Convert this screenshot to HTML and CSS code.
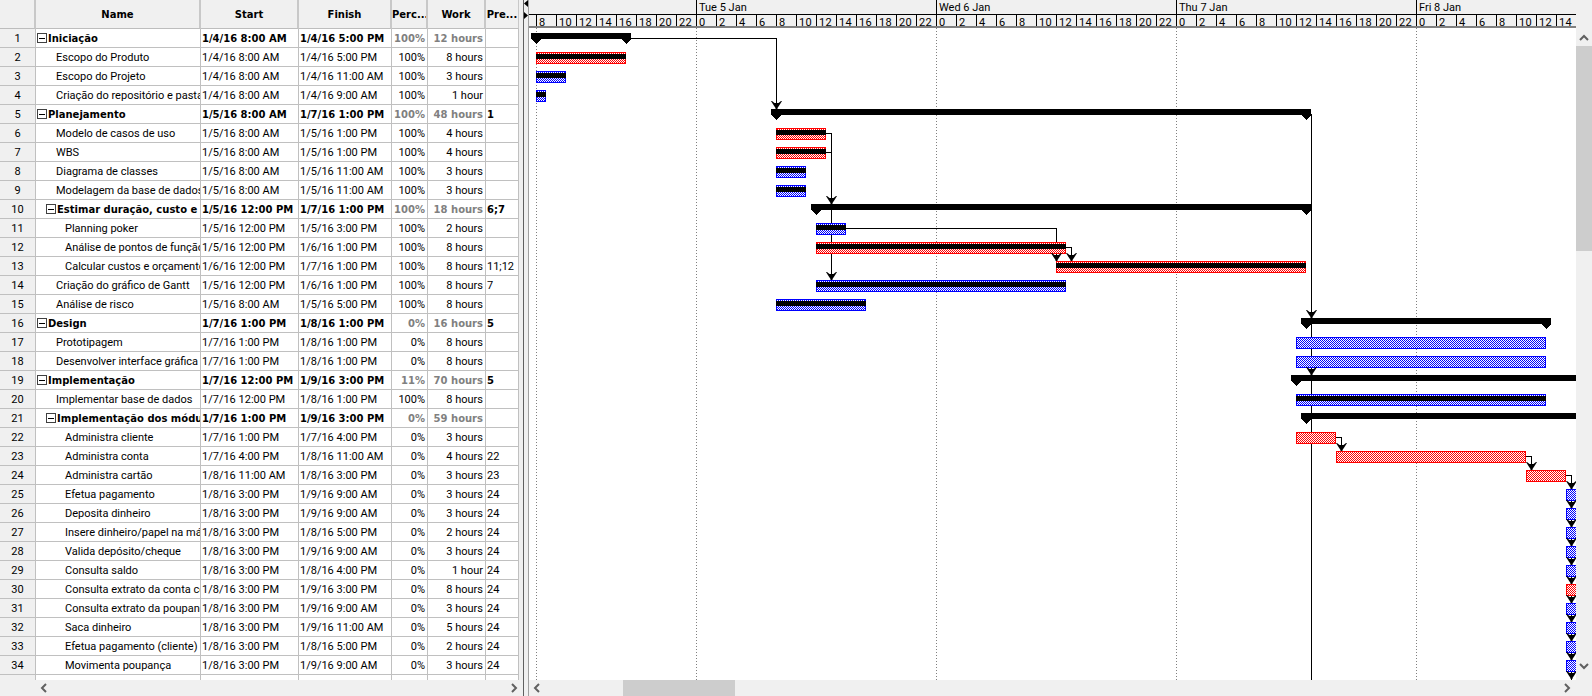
FILE: index.html
```html
<!DOCTYPE html>
<html lang="pt">
<head>
  <meta charset="UTF-8">
  <title>Cronograma - Gantt</title>
  <link rel="stylesheet" href="styles.css">
</head>
<body>
<div class="app">

  <!-- tabela de tarefas -->
  <div class="left">
    <div class="tablebox">
      <table class="tasks">
        <colgroup>
          <col class="c-id"><col class="c-name"><col class="c-start"><col class="c-finish"><col class="c-perc"><col class="c-work"><col class="c-pred">
        </colgroup>
        <thead>
          <tr><th></th><th>Name</th><th>Start</th><th>Finish</th><th>Perc...</th><th>Work</th><th>Pre...</th></tr>
        </thead>
        <tbody>
          <tr class="sum"><td>1</td><td class="lv0"><span class="tog"></span>Iniciação</td><td>1/4/16 8:00 AM</td><td>1/4/16 5:00 PM</td><td>100%</td><td>12 hours</td><td></td></tr>
          <tr><td>2</td><td class="lv1">Escopo do Produto</td><td>1/4/16 8:00 AM</td><td>1/4/16 5:00 PM</td><td>100%</td><td>8 hours</td><td></td></tr>
          <tr><td>3</td><td class="lv1">Escopo do Projeto</td><td>1/4/16 8:00 AM</td><td>1/4/16 11:00 AM</td><td>100%</td><td>3 hours</td><td></td></tr>
          <tr><td>4</td><td class="lv1">Criação do repositório e pastas</td><td>1/4/16 8:00 AM</td><td>1/4/16 9:00 AM</td><td>100%</td><td>1 hour</td><td></td></tr>
          <tr class="sum"><td>5</td><td class="lv0"><span class="tog"></span>Planejamento</td><td>1/5/16 8:00 AM</td><td>1/7/16 1:00 PM</td><td>100%</td><td>48 hours</td><td>1</td></tr>
          <tr><td>6</td><td class="lv1">Modelo de casos de uso</td><td>1/5/16 8:00 AM</td><td>1/5/16 1:00 PM</td><td>100%</td><td>4 hours</td><td></td></tr>
          <tr><td>7</td><td class="lv1">WBS</td><td>1/5/16 8:00 AM</td><td>1/5/16 1:00 PM</td><td>100%</td><td>4 hours</td><td></td></tr>
          <tr><td>8</td><td class="lv1">Diagrama de classes</td><td>1/5/16 8:00 AM</td><td>1/5/16 11:00 AM</td><td>100%</td><td>3 hours</td><td></td></tr>
          <tr><td>9</td><td class="lv1">Modelagem da base de dados</td><td>1/5/16 8:00 AM</td><td>1/5/16 11:00 AM</td><td>100%</td><td>3 hours</td><td></td></tr>
          <tr class="sum"><td>10</td><td class="lv1t"><span class="tog"></span>Estimar duração, custo e cronograma</td><td>1/5/16 12:00 PM</td><td>1/7/16 1:00 PM</td><td>100%</td><td>18 hours</td><td>6;7</td></tr>
          <tr><td>11</td><td class="lv2">Planning poker</td><td>1/5/16 12:00 PM</td><td>1/5/16 3:00 PM</td><td>100%</td><td>2 hours</td><td></td></tr>
          <tr><td>12</td><td class="lv2">Análise de pontos de função</td><td>1/5/16 12:00 PM</td><td>1/6/16 1:00 PM</td><td>100%</td><td>8 hours</td><td></td></tr>
          <tr><td>13</td><td class="lv2">Calcular custos e orçamento</td><td>1/6/16 12:00 PM</td><td>1/7/16 1:00 PM</td><td>100%</td><td>8 hours</td><td>11;12</td></tr>
          <tr><td>14</td><td class="lv1">Criação do gráfico de Gantt</td><td>1/5/16 12:00 PM</td><td>1/6/16 1:00 PM</td><td>100%</td><td>8 hours</td><td>7</td></tr>
          <tr><td>15</td><td class="lv1">Análise de risco</td><td>1/5/16 8:00 AM</td><td>1/5/16 5:00 PM</td><td>100%</td><td>8 hours</td><td></td></tr>
          <tr class="sum"><td>16</td><td class="lv0"><span class="tog"></span>Design</td><td>1/7/16 1:00 PM</td><td>1/8/16 1:00 PM</td><td>0%</td><td>16 hours</td><td>5</td></tr>
          <tr><td>17</td><td class="lv1">Prototipagem</td><td>1/7/16 1:00 PM</td><td>1/8/16 1:00 PM</td><td>0%</td><td>8 hours</td><td></td></tr>
          <tr><td>18</td><td class="lv1">Desenvolver interface gráfica</td><td>1/7/16 1:00 PM</td><td>1/8/16 1:00 PM</td><td>0%</td><td>8 hours</td><td></td></tr>
          <tr class="sum"><td>19</td><td class="lv0"><span class="tog"></span>Implementação</td><td>1/7/16 12:00 PM</td><td>1/9/16 3:00 PM</td><td>11%</td><td>70 hours</td><td>5</td></tr>
          <tr><td>20</td><td class="lv1">Implementar base de dados</td><td>1/7/16 12:00 PM</td><td>1/8/16 1:00 PM</td><td>100%</td><td>8 hours</td><td></td></tr>
          <tr class="sum"><td>21</td><td class="lv1t"><span class="tog"></span>Implementação dos módulos</td><td>1/7/16 1:00 PM</td><td>1/9/16 3:00 PM</td><td>0%</td><td>59 hours</td><td></td></tr>
          <tr><td>22</td><td class="lv2">Administra cliente</td><td>1/7/16 1:00 PM</td><td>1/7/16 4:00 PM</td><td>0%</td><td>3 hours</td><td></td></tr>
          <tr><td>23</td><td class="lv2">Administra conta</td><td>1/7/16 4:00 PM</td><td>1/8/16 11:00 AM</td><td>0%</td><td>4 hours</td><td>22</td></tr>
          <tr><td>24</td><td class="lv2">Administra cartão</td><td>1/8/16 11:00 AM</td><td>1/8/16 3:00 PM</td><td>0%</td><td>3 hours</td><td>23</td></tr>
          <tr><td>25</td><td class="lv2">Efetua pagamento</td><td>1/8/16 3:00 PM</td><td>1/9/16 9:00 AM</td><td>0%</td><td>3 hours</td><td>24</td></tr>
          <tr><td>26</td><td class="lv2">Deposita dinheiro</td><td>1/8/16 3:00 PM</td><td>1/9/16 9:00 AM</td><td>0%</td><td>3 hours</td><td>24</td></tr>
          <tr><td>27</td><td class="lv2">Insere dinheiro/papel na máquina</td><td>1/8/16 3:00 PM</td><td>1/8/16 5:00 PM</td><td>0%</td><td>2 hours</td><td>24</td></tr>
          <tr><td>28</td><td class="lv2">Valida depósito/cheque</td><td>1/8/16 3:00 PM</td><td>1/9/16 9:00 AM</td><td>0%</td><td>3 hours</td><td>24</td></tr>
          <tr><td>29</td><td class="lv2">Consulta saldo</td><td>1/8/16 3:00 PM</td><td>1/8/16 4:00 PM</td><td>0%</td><td>1 hour</td><td>24</td></tr>
          <tr><td>30</td><td class="lv2">Consulta extrato da conta corrente</td><td>1/8/16 3:00 PM</td><td>1/9/16 3:00 PM</td><td>0%</td><td>8 hours</td><td>24</td></tr>
          <tr><td>31</td><td class="lv2">Consulta extrato da poupança</td><td>1/8/16 3:00 PM</td><td>1/9/16 9:00 AM</td><td>0%</td><td>3 hours</td><td>24</td></tr>
          <tr><td>32</td><td class="lv2">Saca dinheiro</td><td>1/8/16 3:00 PM</td><td>1/9/16 11:00 AM</td><td>0%</td><td>5 hours</td><td>24</td></tr>
          <tr><td>33</td><td class="lv2">Efetua pagamento (cliente)</td><td>1/8/16 3:00 PM</td><td>1/8/16 5:00 PM</td><td>0%</td><td>2 hours</td><td>24</td></tr>
          <tr><td>34</td><td class="lv2">Movimenta poupança</td><td>1/8/16 3:00 PM</td><td>1/9/16 9:00 AM</td><td>0%</td><td>3 hours</td><td>24</td></tr>
          <tr class="last"><td></td><td></td><td></td><td></td><td></td><td></td><td></td></tr>
        </tbody>
      </table>
    </div>
    <div class="hscroll table-scroll">
      <svg class="chev" width="8" height="10" viewBox="0 0 8 10"><path d="M6 1L2 5L6 9"/></svg>
      <svg class="chev" width="8" height="10" viewBox="0 0 8 10"><path d="M2 1L6 5L2 9"/></svg>
    </div>
  </div>

  <div class="split">
    <svg width="4" height="20" viewBox="0 0 4 20">
      <path d="M0 3.5L4 0V7Z"/>
      <path d="M4 15.5L0 12V19Z"/>
    </svg>
  </div>

  <!-- grafico -->
  <div class="right">
    <div class="timeline">
      <div class="days">
        <span class="pad-days"></span>
        <span class="day">Tue 5 Jan</span>
        <span class="day">Wed 6 Jan</span>
        <span class="day">Thu 7 Jan</span>
        <span class="day">Fri 8 Jan</span>
      </div>
      <div class="ticks">
        <span class="pad-ticks"></span>
        <span>8</span><span>10</span><span>12</span><span>14</span><span>16</span><span>18</span><span>20</span><span>22</span>
        <span>0</span><span>2</span><span>4</span><span>6</span><span>8</span><span>10</span><span>12</span><span>14</span><span>16</span><span>18</span><span>20</span><span>22</span>
        <span>0</span><span>2</span><span>4</span><span>6</span><span>8</span><span>10</span><span>12</span><span>14</span><span>16</span><span>18</span><span>20</span><span>22</span>
        <span>0</span><span>2</span><span>4</span><span>6</span><span>8</span><span>10</span><span>12</span><span>14</span><span>16</span><span>18</span><span>20</span><span>22</span>
        <span>0</span><span>2</span><span>4</span><span>6</span><span>8</span><span>10</span><span>12</span><span>14</span>
      </div>
    </div>
    <div class="chartrow">
      <svg class="chart" width="1047" height="652" viewBox="529 28 1047 652" shape-rendering="crispEdges">
        <defs>
          <pattern id="hred" width="2" height="2" patternUnits="userSpaceOnUse">
            <rect width="2" height="2" fill="#fff"/><rect width="1" height="1" fill="#f00"/><rect x="1" y="1" width="1" height="1" fill="#f00"/>
          </pattern>
          <pattern id="hblue" width="2" height="2" patternUnits="userSpaceOnUse">
            <rect width="2" height="2" fill="#fff"/><rect width="1" height="1" fill="#00f"/><rect x="1" y="1" width="1" height="1" fill="#00f"/>
          </pattern>
          <path id="arrow" d="M-5 -7L-4 -7L-1.5 -5H2.5L5 -7L6 -7L3.5 -3L1.5 0V1H-0.5V0L-2.5 -3Z" shape-rendering="auto"/>
        </defs>

        <!-- inicio dos dias -->
        <g class="daylines">
          <path d="M536.5 28V680M696.5 28V680M936.5 28V680M1176.5 28V680M1416.5 28V680"/>
        </g>

        <!-- dependencias -->
        <g class="links">
          <path d="M631 38.5H776.5V109"/>
          <path d="M826 133.5H831.5V280"/>
          <path d="M826 152.5H831.5"/>
          <path d="M846 228.5H1056.5V261"/>
          <path d="M1066 247.5H1071.5V261"/>
          <path d="M1311.5 114V680"/>
          <path d="M1336 437.5H1341.5V451"/>
          <path d="M1526 456.5H1531.5V470"/>
          <path d="M1566 475.5H1571.5V680"/>
        </g>

        <!-- tarefas resumo -->
        <g>
          <polygon points="531,33 631,33 631,39 626,44 621,39 541,39 536,44 531,39"/>
          <polygon points="771,109 1311,109 1311,115 1306,120 1301,115 781,115 776,120 771,115"/>
          <polygon points="811,204 1311,204 1311,210 1306,215 1301,210 821,210 816,215 811,210"/>
          <polygon points="1301,318 1551,318 1551,324 1546,329 1541,324 1311,324 1306,329 1301,324"/>
          <polygon points="1291,375 1580,375 1580,381 1301,381 1296,386 1291,381"/>
          <polygon points="1301,413 1580,413 1580,419 1311,419 1306,424 1301,419"/>
        </g>

        <!-- tarefas vermelhas -->
        <g fill="url(#hred)" stroke="#f00">
          <rect x="536.5" y="52.5" width="89" height="11"/>
          <rect x="776.5" y="128.5" width="49" height="11"/>
          <rect x="776.5" y="147.5" width="49" height="11"/>
          <rect x="816.5" y="242.5" width="249" height="11"/>
          <rect x="1056.5" y="261.5" width="249" height="11"/>
          <rect x="1296.5" y="432.5" width="39" height="11"/>
          <rect x="1336.5" y="451.5" width="189" height="11"/>
          <rect x="1526.5" y="470.5" width="39" height="11"/>
          <rect x="1566.5" y="584.5" width="30" height="11"/>
        </g>

        <!-- tarefas azuis -->
        <g fill="url(#hblue)" stroke="#00f">
          <rect x="536.5" y="71.5" width="29" height="11"/>
          <rect x="536.5" y="90.5" width="9" height="11"/>
          <rect x="776.5" y="166.5" width="29" height="11"/>
          <rect x="776.5" y="185.5" width="29" height="11"/>
          <rect x="816.5" y="223.5" width="29" height="11"/>
          <rect x="816.5" y="280.5" width="249" height="11"/>
          <rect x="776.5" y="299.5" width="89" height="11"/>
          <rect x="1296.5" y="337.5" width="249" height="11"/>
          <rect x="1296.5" y="356.5" width="249" height="11"/>
          <rect x="1296.5" y="394.5" width="249" height="11"/>
          <rect x="1566.5" y="489.5" width="30" height="11"/>
          <rect x="1566.5" y="508.5" width="30" height="11"/>
          <rect x="1566.5" y="527.5" width="30" height="11"/>
          <rect x="1566.5" y="546.5" width="30" height="11"/>
          <rect x="1566.5" y="565.5" width="30" height="11"/>
          <rect x="1566.5" y="603.5" width="30" height="11"/>
          <rect x="1566.5" y="622.5" width="30" height="11"/>
          <rect x="1566.5" y="641.5" width="30" height="11"/>
          <rect x="1566.5" y="660.5" width="30" height="11"/>
        </g>

        <!-- progresso -->
        <g>
          <rect x="536" y="54" width="90" height="5"/>
          <rect x="536" y="73" width="30" height="5"/>
          <rect x="536" y="92" width="10" height="5"/>
          <rect x="776" y="130" width="50" height="5"/>
          <rect x="776" y="149" width="50" height="5"/>
          <rect x="776" y="168" width="30" height="5"/>
          <rect x="776" y="187" width="30" height="5"/>
          <rect x="816" y="225" width="30" height="5"/>
          <rect x="816" y="244" width="250" height="5"/>
          <rect x="1056" y="263" width="250" height="5"/>
          <rect x="816" y="282" width="250" height="5"/>
          <rect x="776" y="301" width="90" height="5"/>
          <rect x="1296" y="396" width="250" height="5"/>
        </g>

        <!-- setas -->
        <g>
          <use href="#arrow" x="776" y="108"/>
          <use href="#arrow" x="831" y="203"/>
          <use href="#arrow" x="831" y="279"/>
          <use href="#arrow" x="1056" y="260"/>
          <use href="#arrow" x="1071" y="260"/>
          <use href="#arrow" x="1311" y="317"/>
          <use href="#arrow" x="1311" y="374"/>
          <use href="#arrow" x="1341" y="450"/>
          <use href="#arrow" x="1531" y="469"/>
          <use href="#arrow" x="1571" y="488"/>
          <use href="#arrow" x="1571" y="507"/>
          <use href="#arrow" x="1571" y="526"/>
          <use href="#arrow" x="1571" y="545"/>
          <use href="#arrow" x="1571" y="564"/>
          <use href="#arrow" x="1571" y="583"/>
          <use href="#arrow" x="1571" y="602"/>
          <use href="#arrow" x="1571" y="621"/>
          <use href="#arrow" x="1571" y="640"/>
          <use href="#arrow" x="1571" y="659"/>
          <use href="#arrow" x="1571" y="678"/>
        </g>
      </svg>
      <div class="vscroll">
        <svg class="chev" width="10" height="8" viewBox="0 0 10 8"><path d="M1 6L5 2L9 6"/></svg>
        <div class="vthumb"></div>
        <svg class="chev" width="10" height="8" viewBox="0 0 10 8"><path d="M1 2L5 6L9 2"/></svg>
      </div>
    </div>
    <div class="hscroll chart-scroll">
      <svg class="chev" width="8" height="10" viewBox="0 0 8 10"><path d="M6 1L2 5L6 9"/></svg>
      <div class="hthumb"></div>
      <svg class="chev" width="8" height="10" viewBox="0 0 8 10"><path d="M2 1L6 5L2 9"/></svg>
    </div>
  </div>

</div>
</body>
</html>
```

FILE: styles.css
```css
* { box-sizing: border-box; }
html, body { margin: 0; padding: 0; height: 100%; overflow: hidden; }
body { font-family: Roboto, sans-serif; font-size: 11px; color: #000; background: #f0f0f0; }

.app { display: flex; width: 1592px; height: 696px; }

/* tabela */
.left { width: 523px; display: flex; flex-direction: column; }
.tablebox { height: 680px; width: 519px; overflow: hidden; background: #fff; }
.tasks { width: 519px; table-layout: fixed; border-collapse: separate; border-spacing: 0; }
.c-id { width: 36px; }
.c-name { width: 165px; }
.c-start { width: 98px; }
.c-finish { width: 93px; }
.c-perc { width: 36px; }
.c-work { width: 58px; }
.c-pred { width: 33px; }

.tasks th {
  height: 29px;
  padding: 1px 0 0;
  background: #f0f0f0;
  border-right: 2px solid #c8c8c8;
  border-bottom: 1px solid #bdbdbd;
  font-family: "DejaVu Sans", sans-serif;
  font-size: 10px;
  font-weight: bold;
  text-align: center;
  overflow: hidden;
  white-space: nowrap;
}
.tasks th:last-child { border-right-width: 1px; }

.tasks td {
  height: 19px;
  padding: 2px 0 0 1px;
  border-right: 1px solid #c0c0c0;
  border-bottom: 1px solid #c0c0c0;
  overflow: hidden;
  white-space: nowrap;
  line-height: 16px;
}
.tasks td:nth-child(1) { background: #f0f0f0; text-align: center; padding: 2px 0 0; }
.tasks td:nth-child(5), .tasks td:nth-child(6) { text-align: right; padding: 2px 2px 0 0; }

.tasks td.lv0 { padding-left: 1px; }
.tasks td.lv1 { padding-left: 20px; }
.tasks td.lv1t { padding-left: 10px; }
.tasks td.lv2 { padding-left: 29px; }

.sum td { font-family: "DejaVu Sans", sans-serif; font-size: 10px; font-weight: bold; }
.sum td:nth-child(1) { font-family: Roboto, sans-serif; font-size: 11px; font-weight: normal; }
.sum td:nth-child(5), .sum td:nth-child(6) { color: #808080; }
.tasks .last td { height: 5px; padding: 0; border-bottom: 0; line-height: 0; }

.tog {
  display: inline-block;
  width: 10px;
  height: 10px;
  margin-right: 1px;
  vertical-align: -1px;
  border: 1px solid #404040;
  background: linear-gradient(#000, #000) center / 6px 1px no-repeat #fff;
}

/* barras de rolagem */
.hscroll { height: 16px; display: flex; align-items: center; background: #f0f0f0; }
.table-scroll { width: 519px; justify-content: space-between; padding: 0 1px 0 40px; }
.chart-scroll { padding-left: 4px; }
.hthumb { width: 112px; height: 16px; margin-left: 82px; margin-right: 828px; background: #cdcdcd; }
.vscroll { width: 16px; height: 652px; display: flex; flex-direction: column; align-items: center; background: #f0f0f0; padding-top: 6px; }
.vthumb { width: 16px; height: 205px; margin: 4px 0 411px; background: #cdcdcd; }
.chev { flex: none; }
.chev path { fill: none; stroke: #606060; stroke-width: 2; }

/* divisor */
.split { width: 6px; border-left: 1px solid #606060; border-right: 1px solid #a0a0a0; background: #f0f0f0; }
.split svg { display: block; }
.split path { fill: #000; }

/* grafico */
.right { flex: 1; min-width: 0; display: flex; flex-direction: column; }
.timeline { height: 28px; border-bottom: 2px solid #808080; width: 1047px; overflow: hidden; }
.days, .ticks { display: flex; white-space: nowrap; }
.days { height: 15px; line-height: 15px; border-bottom: 1px solid #000; }
.ticks { height: 11px; line-height: 15px; letter-spacing: 0.4px; }
.pad-days { flex: none; width: 167px; }
.day { flex: none; width: 240px; padding-left: 2px; border-left: 1px solid #000; }
.ticks span { flex: none; width: 20px; padding-left: 2px; border-left: 1px solid #000; }
.ticks .pad-ticks { width: 7px; padding: 0; border: 0; }

.chartrow { display: flex; height: 652px; }
.chart { display: block; background: #fff; }
.daylines path { fill: none; stroke: #808080; stroke-dasharray: 1 2; }
.links path { fill: none; stroke: #000; }
```
